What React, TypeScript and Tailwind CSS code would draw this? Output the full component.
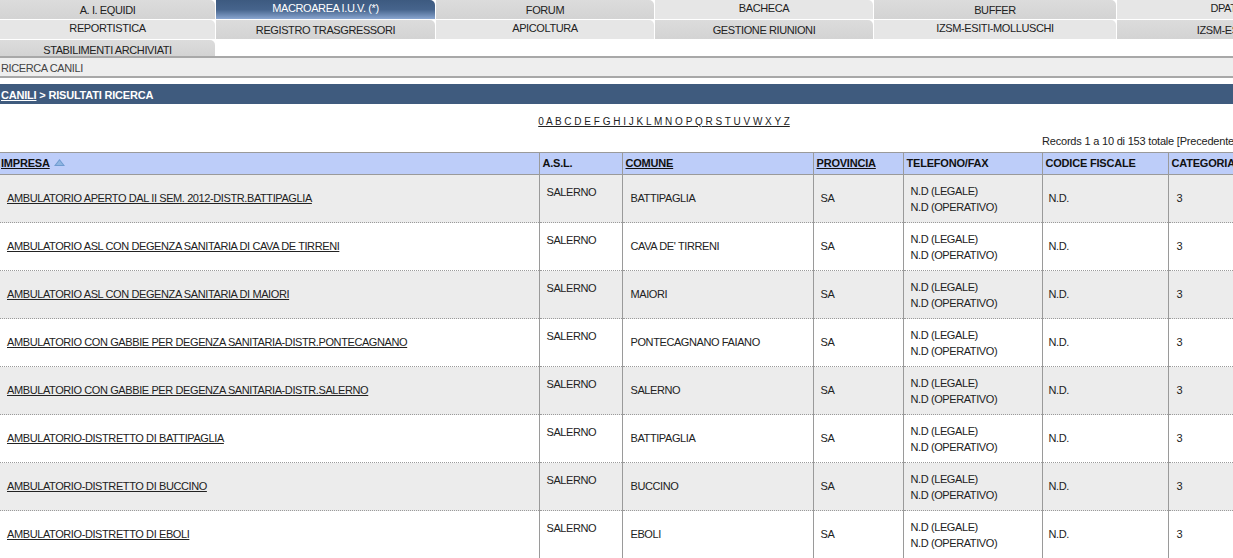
import { ReactNode } from "react";

type Tab = { label: string; kind: "dark" | "light" | "active" };

const tabRows: Tab[][] = [
  [
    { label: "A. I. EQUIDI", kind: "dark" },
    { label: "MACROAREA I.U.V. (*)", kind: "active" },
    { label: "FORUM", kind: "dark" },
    { label: "BACHECA", kind: "light" },
    { label: "BUFFER", kind: "dark" },
    { label: "DPAT", kind: "light" },
  ],
  [
    { label: "REPORTISTICA", kind: "light" },
    { label: "REGISTRO TRASGRESSORI", kind: "dark" },
    { label: "APICOLTURA", kind: "light" },
    { label: "GESTIONE RIUNIONI", kind: "dark" },
    { label: "IZSM-ESITI-MOLLUSCHI", kind: "light" },
    { label: "IZSM-ESITI", kind: "dark" },
  ],
  [{ label: "STABILIMENTI ARCHIVIATI", kind: "dark" }],
];

const rows = [
  ["AMBULATORIO APERTO DAL II SEM. 2012-DISTR.BATTIPAGLIA", "BATTIPAGLIA"],
  ["AMBULATORIO ASL CON DEGENZA SANITARIA DI CAVA DE TIRRENI", "CAVA DE' TIRRENI"],
  ["AMBULATORIO ASL CON DEGENZA SANITARIA DI MAIORI", "MAIORI"],
  ["AMBULATORIO CON GABBIE PER DEGENZA SANITARIA-DISTR.PONTECAGNANO", "PONTECAGNANO FAIANO"],
  ["AMBULATORIO CON GABBIE PER DEGENZA SANITARIA-DISTR.SALERNO", "SALERNO"],
  ["AMBULATORIO-DISTRETTO DI BATTIPAGLIA", "BATTIPAGLIA"],
  ["AMBULATORIO-DISTRETTO DI BUCCINO", "BUCCINO"],
  ["AMBULATORIO-DISTRETTO DI EBOLI", "EBOLI"],
  ["AMBULATORIO-DISTRETTO DI EBOLI", "EBOLI"],
];

const letters = "0 A B C D E F G H I J K L M N O P Q R S T U V W X Y Z";

const TabCell = ({ tab }: { tab: Tab }) => {
  const base =
    "h-full rounded-tr-[5px] text-center text-[11px] leading-[13px] tracking-[-0.4px] whitespace-nowrap overflow-hidden";
  if (tab.kind === "active")
    return (
      <div className={`${base} bg-gradient-to-b from-[#3d5a80] via-[#46648c] to-[#8aa6d0] text-white pt-[2px]`}>
        {tab.label}
      </div>
    );
  if (tab.kind === "light")
    return <div className={`${base} bg-[#e6e6e6] text-[#222] pt-[2px]`}>{tab.label}</div>;
  return (
    <div className={`${base} bg-gradient-to-b from-[#dcdcdc] to-[#d3d3d3] text-[#222] pt-[4px]`}>
      {tab.label}
    </div>
  );
};

const Th = ({ children, first }: { children: ReactNode; first?: boolean }) => (
  <th
    className={`border border-[#9a9a9a] ${
      first ? "border-l-0 pl-[1px]" : "pl-[3px]"
    } text-left font-bold text-[11px] tracking-[-0.2px] py-0 h-[22px] text-[#111]`}
  >
    {children}
  </th>
);

export default function App() {
  return (
    <div className="w-[1233px] h-[558px] overflow-hidden bg-white font-['Liberation_Sans',Tahoma,sans-serif] text-[11px] tracking-[-0.4px] text-[#222]">
      <div className="w-[1330px]">
        {/* tab menu */}
        <div className="grid grid-cols-[215px_219px_218px_218px_242px_1fr] grid-rows-[19px_19px_16px] gap-px">
          {tabRows.map((r, i) =>
            r.map((t, j) => <TabCell key={`${i}-${j}`} tab={t} />)
          )}
        </div>

        <div className="border-t-2 border-[#a8a8a8]" />
        <div className="bg-[#eeeeee] h-[20px] border-b-2 border-[#a8a8a8] pl-[1px] pt-[2px] text-[11px] text-[#444]">
          RICERCA CANILI
        </div>

        <div className="mt-[6px] bg-[#3f5b7e] h-[20px] pl-[1px] pt-[3px] text-white font-bold text-[11px] tracking-[-0.2px]">
          <span className="underline">CANILI</span> &gt; RISULTATI RICERCA
        </div>

        <div className="h-[48px] flex flex-col">
          <div className="mt-[10px] text-center text-[10px] tracking-[0px] pr-[2px]">
            <span className="underline">{letters}</span>
          </div>
          <div className="mt-[4px] pl-[1042px] whitespace-nowrap text-[11px] tracking-[-0.2px]">
            Records 1 a 10 di 153 totale [Precedente] [Successivo]
          </div>
        </div>

        <table className="table-fixed border-collapse w-[1330px]">
          <colgroup>
            <col className="w-[539px]" />
            <col className="w-[83px]" />
            <col className="w-[191px]" />
            <col className="w-[90px]" />
            <col className="w-[139px]" />
            <col className="w-[126px]" />
            <col />
          </colgroup>
          <thead>
            <tr className="bg-[#bdcdf9]">
              <Th first>
                <span className="underline">IMPRESA</span>
                <svg className="inline-block ml-[4px] -mt-[3px]" width="11" height="7" viewBox="0 0 11 7">
                  <path d="M5.5 0 L11 7 L0 7 Z" fill="#6f9bd0" />
                  <path d="M5.5 1.5 L9 6 L2 6 Z" fill="#8fb6e2" />
                </svg>
              </Th>
              <Th>A.S.L.</Th>
              <Th>
                <span className="underline">COMUNE</span>
              </Th>
              <Th>
                <span className="underline">PROVINCIA</span>
              </Th>
              <Th>TELEFONO/FAX</Th>
              <Th>CODICE FISCALE</Th>
              <Th>CATEGORIA</Th>
            </tr>
          </thead>
          <tbody>
            {rows.map(([name, comune], i) => (
              <tr
                key={i}
                className={`${i % 2 === 0 ? "bg-[#ececec]" : "bg-white"} h-[48px] border-b border-dotted border-b-[#9a9a9a]`}
              >
                <td className="border-r border-[#9a9a9a] px-[7px] align-middle">
                  <span className="underline">{name}</span>
                </td>
                <td className="border-x border-[#9a9a9a] px-[7px] align-top pt-[9px]">SALERNO</td>
                <td className="border-x border-[#9a9a9a] pl-[8px] align-middle">{comune}</td>
                <td className="border-x border-[#9a9a9a] pl-[7px] align-middle">SA</td>
                <td className="border-x border-[#9a9a9a] pl-[7px] align-middle leading-[16px]">
                  N.D (LEGALE)
                  <br />
                  N.D (OPERATIVO)
                </td>
                <td className="border-x border-[#9a9a9a] pl-[6px] align-middle">N.D.</td>
                <td className="border-x border-[#9a9a9a] pl-[8px] align-middle">3</td>
              </tr>
            ))}
          </tbody>
        </table>
      </div>
    </div>
  );
}
